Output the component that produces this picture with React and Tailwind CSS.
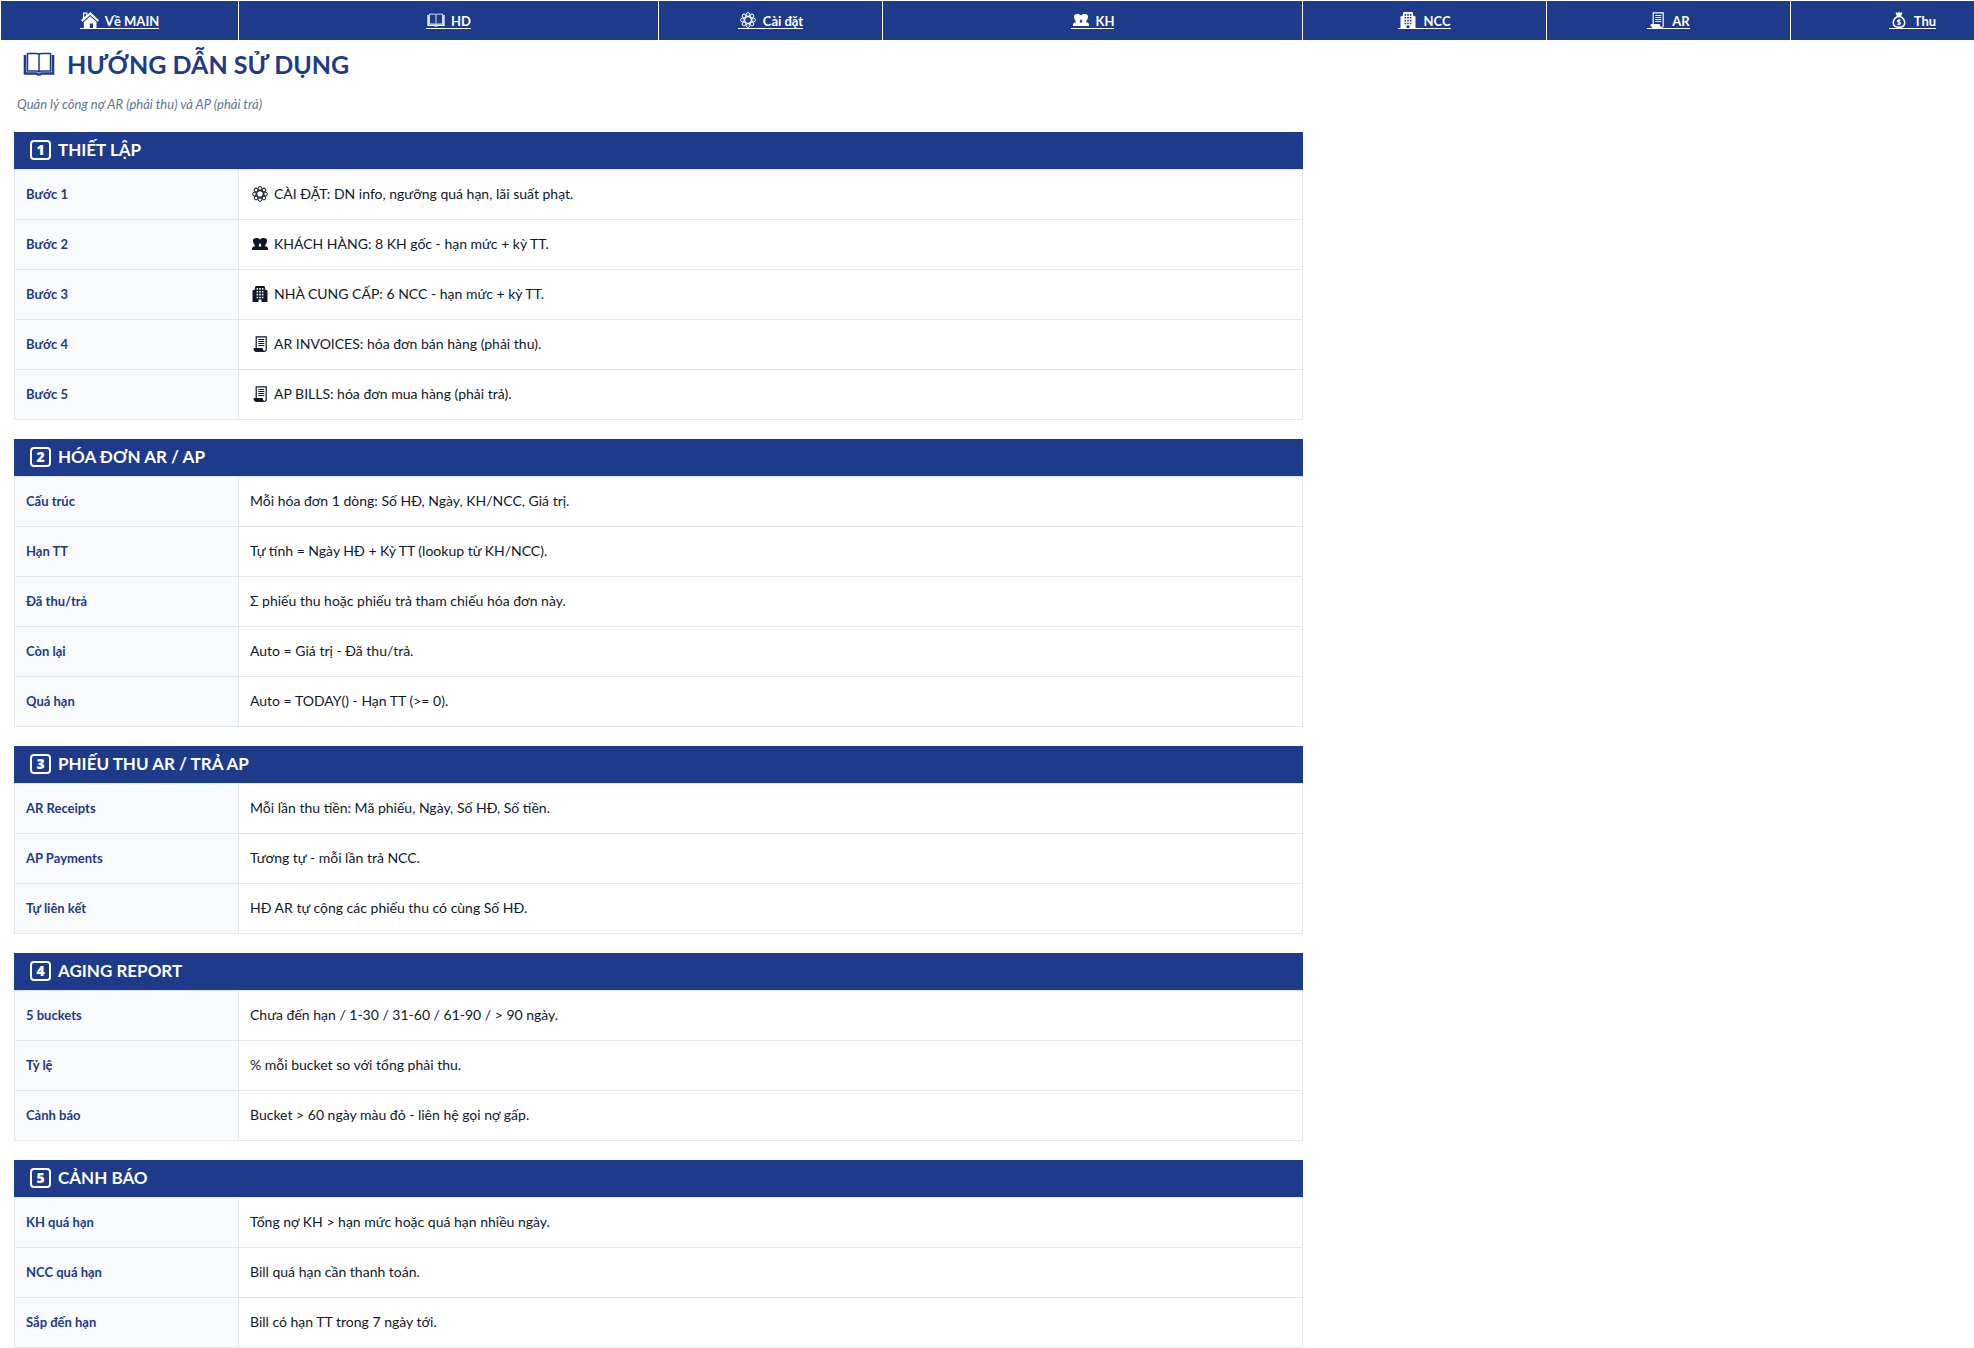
const HouseIcon = ({ className }) => (
  <svg viewBox="0 0 18 16" className={className} fill="currentColor" aria-hidden="true">
    <path d="M2 .5h4.500v2.200L9.300 0 18 8.200l-1.400 1.600-7.300-6.700L1.400 9.800 0 8.200l2-2zM3.200 1.700v3.400L5.300 3.200V1.700z" fillRule="evenodd" />
    <path d="M9.300 4.300l6.200 5.600V16H12v-4.500H8.800V16H2.800V9.900z" />
  </svg>
)

const BookIcon = ({ className }) => (
  <svg viewBox="0 0 32 24" className={className} fill="none" stroke="currentColor" aria-hidden="true">
    <path strokeWidth="1.500" d="M4.500 1.500h9c1.500 0 2.500.5 2.500 1.500 0-1 1-1.500 2.500-1.500h9v17.500h-9c-1.500 0-2.500.5-2.500 1.500 0-1-1-1.500-2.500-1.500h-9zM16 3v17" />
    <path strokeWidth="2.600" d="M2 3v18.500h11.500c.4 1.400 4.600 1.400 5 0H30V3" />
  </svg>
)

const GearIcon = ({ className }) => (
  <svg viewBox="0 0 16 16" className={className} fill="none" stroke="currentColor" strokeWidth="1" aria-hidden="true">
    <circle cx="8" cy="8" r="3.300" strokeWidth="1.200" />
    {[0, 45, 90, 135, 180, 225, 270, 315].map((deg) => (
      <circle key={deg} cx="8" cy="2.400" r="1.800" transform={`rotate(${deg} 8 8)`} />
    ))}
  </svg>
)

const PeopleIcon = ({ className }) => (
  <svg viewBox="0 0 16 16" className={className} fill="currentColor" aria-hidden="true">
    <path
      fillRule="evenodd"
      d="M1 4.500C1 2.800 2.300 2 4.300 2S7.500 2.600 8 3.600C8.500 2.600 9.700 2 11.700 2S15 2.800 15 4.500c0 1.900-.6 3.600-1.800 4.500v1.300c1.700.3 2.800 1 2.800 2.300V14H0v-1.400C0 11.300 1.100 10.600 2.800 10.300V9C1.600 8.100 1 6.400 1 4.500zM8 6.800c-.2 1-.7 1.700-1.200 2.200v.9L8 11l1.200-1.100V9C8.700 8.500 8.200 7.800 8 6.800z"
    />
  </svg>
)

const BuildingIcon = ({ className }) => (
  <svg viewBox="0 0 16 16" className={className} fill="currentColor" aria-hidden="true">
    <path
      fillRule="evenodd"
      d="M3 1l1-1h8l1 1v2.500l2.500 1V16h-6v-2.500h-3V16h-6V4.500l2.500-1zM4.600 2v1.700h1.500V2zm2.600 0v1.700h1.600V2zm2.700 0v1.700h1.500V2zM4.600 4.900v1.700h1.500V4.900zm2.600 0v1.700h1.600V4.900zm2.700 0v1.700h1.500V4.900zM4.600 7.800v1.700h1.500V7.800zm2.600 0v1.700h1.600V7.800zm2.700 0v1.700h1.500V7.800zM4.600 10.700v1.500h1.500v-1.500zm2.600 0v1.500h1.600v-1.500zm2.700 0v1.500h1.500v-1.500z"
    />
  </svg>
)

const ReceiptIcon = ({ className }) => (
  <svg viewBox="0 0 16 16" className={className} fill="none" stroke="currentColor" aria-hidden="true">
    <path strokeWidth="1.200" d="M4.200 12.500V.8h10v12.700c0 1.200-.8 1.800-2 1.800" />
    <path strokeWidth="1" d="M6.300 3.500h6M6.300 5.500h6M6.300 7.500h6M6.300 9.500h6" />
    <path fill="currentColor" d="M2 12.500h8.500c0 1.500.5 2.500 1.800 2.900H4c-1.300 0-2-1-2-2.900z" />
  </svg>
)

const MoneyBagIcon = ({ className }) => (
  <svg viewBox="0 0 16 16" className={className} fill="none" stroke="currentColor" aria-hidden="true">
    <path strokeWidth="1.500" d="M6 4.800C4 6 2.300 8 2.300 10.700c0 3 1.900 4.500 5.700 4.500s5.700-1.500 5.700-4.500C13.700 8 12 6 10 4.800z" />
    <path fill="currentColor" d="M5 .8l1.700.5L8 .5l1.300.8L11 .8 9.800 3.800H6.200z" />
    <path strokeWidth="1.100" d="M9.600 8.500c-.8-.8-3.200-.7-3.200.6 0 1.500 3.200.7 3.200 2.200 0 1.400-2.500 1.400-3.400.5M8 7v6.300" />
  </svg>
)

const navItems = [
  { id: 'main', label: 'Về MAIN', icon: HouseIcon, width: 'w-[238px]' },
  { id: 'hd', label: 'HD', icon: BookIcon, width: 'w-[420px]' },
  { id: 'cai-dat', label: 'Cài đặt', icon: GearIcon, width: 'w-[224px]' },
  { id: 'kh', label: 'KH', icon: PeopleIcon, width: 'w-[420px]' },
  { id: 'ncc', label: 'NCC', icon: BuildingIcon, width: 'w-[244px]' },
  { id: 'ar', label: 'AR', icon: ReceiptIcon, width: 'w-[244px]' },
  { id: 'thu', label: 'Thu', icon: MoneyBagIcon, width: 'w-[244px]' }
]

const sections = [
  {
    title: 'THIẾT LẬP',
    rows: [
      { label: 'Bước 1', icon: GearIcon, text: 'CÀI ĐẶT: DN info, ngưỡng quá hạn, lãi suất phạt.' },
      { label: 'Bước 2', icon: PeopleIcon, text: 'KHÁCH HÀNG: 8 KH gốc - hạn mức + kỳ TT.' },
      { label: 'Bước 3', icon: BuildingIcon, text: 'NHÀ CUNG CẤP: 6 NCC - hạn mức + kỳ TT.' },
      { label: 'Bước 4', icon: ReceiptIcon, text: 'AR INVOICES: hóa đơn bán hàng (phải thu).' },
      { label: 'Bước 5', icon: ReceiptIcon, text: 'AP BILLS: hóa đơn mua hàng (phải trả).' }
    ]
  },
  {
    title: 'HÓA ĐƠN AR / AP',
    rows: [
      { label: 'Cấu trúc', text: 'Mỗi hóa đơn 1 dòng: Số HĐ, Ngày, KH/NCC, Giá trị.' },
      { label: 'Hạn TT', text: 'Tự tính = Ngày HĐ + Kỳ TT (lookup từ KH/NCC).' },
      { label: 'Đã thu/trả', text: 'Σ phiếu thu hoặc phiếu trả tham chiếu hóa đơn này.' },
      { label: 'Còn lại', text: 'Auto = Giá trị - Đã thu/trả.' },
      { label: 'Quá hạn', text: 'Auto = TODAY() - Hạn TT (>= 0).' }
    ]
  },
  {
    title: 'PHIẾU THU AR / TRẢ AP',
    rows: [
      { label: 'AR Receipts', text: 'Mỗi lần thu tiền: Mã phiếu, Ngày, Số HĐ, Số tiền.' },
      { label: 'AP Payments', text: 'Tương tự - mỗi lần trả NCC.' },
      { label: 'Tự liên kết', text: 'HĐ AR tự cộng các phiếu thu có cùng Số HĐ.' }
    ]
  },
  {
    title: 'AGING REPORT',
    rows: [
      { label: '5 buckets', text: 'Chưa đến hạn / 1-30 / 31-60 / 61-90 / > 90 ngày.' },
      { label: 'Tỷ lệ', text: '% mỗi bucket so với tổng phải thu.' },
      { label: 'Cảnh báo', text: 'Bucket > 60 ngày màu đỏ - liên hệ gọi nợ gấp.' }
    ]
  },
  {
    title: 'CẢNH BÁO',
    rows: [
      { label: 'KH quá hạn', text: 'Tổng nợ KH > hạn mức hoặc quá hạn nhiều ngày.' },
      { label: 'NCC quá hạn', text: 'Bill quá hạn cần thanh toán.' },
      { label: 'Sắp đến hạn', text: 'Bill có hạn TT trong 7 ngày tới.' }
    ]
  }
]

const NavBar = () => (
  <nav className="flex overflow-hidden pt-px pl-px">
    {navItems.map(({ id, label, icon: Icon, width }) => (
      <div
        key={id}
        className={`flex h-[39px] shrink-0 items-center justify-center border-r border-white bg-[#1e3a8a] ${width}`}
      >
        <a
          href={`#${id}`}
          className="flex items-end gap-[5px] border-b border-white text-[13px] leading-[14px] font-bold text-white"
        >
          <span className="flex w-5 justify-center">
            <Icon className="h-4 w-[18px]" />
          </span>
          {label}
        </a>
      </div>
    ))}
  </nav>
)

const GuideSection = ({ number, title, rows }) => (
  <section>
    <h2 className="flex h-[37px] items-center gap-[7px] bg-[#1e3a8a] pb-0.5 pl-4 text-[17px] font-bold text-white">
      <span className="flex h-5 w-[21px] items-center justify-center rounded-sm border-2 border-white font-['Open_Sans',sans-serif] text-sm leading-none font-extrabold">
        {number}
      </span>
      {title}
    </h2>
    <table className="w-full table-fixed border-collapse leading-4">
      <tbody>
        {rows.map(({ label, icon: Icon, text }) => (
          <tr key={label} className="h-[50px]">
            <th
              scope="row"
              className="w-[224px] border border-slate-200 bg-slate-50 px-[11px] pb-0.5 text-left text-[13px] font-bold text-[#1e3a8a]"
            >
              {label}
            </th>
            <td className="border border-slate-200 px-[11px] pb-0.5 text-sm leading-4 text-slate-900">
              <div className="flex items-center">
                {Icon && (
                  <span className="flex w-6 pl-0.5">
                    <Icon className="size-4" />
                  </span>
                )}
                {text}
              </div>
            </td>
          </tr>
        ))}
      </tbody>
    </table>
  </section>
)

const App = () => {
  return (
    <div className="bg-white font-['Lato',sans-serif]">
      <NavBar />
      <main className="pl-3.5">
        <h1 className="flex h-[47px] items-center gap-3 pl-[9px] text-[25px] leading-8 font-bold text-[#1e3a8a]">
          <BookIcon className="h-6 w-8" />
          HƯỚNG DẪN SỬ DỤNG
        </h1>
        <p className="h-[45px] pt-[9px] pl-[3px] text-[13px] leading-4 text-slate-500 italic">
          Quản lý công nợ AR (phải thu) và AP (phải trả)
        </p>
        <div className="flex max-w-[1289px] flex-col gap-[19px]">
          {sections.map((section, index) => (
            <GuideSection key={section.title} number={index + 1} {...section} />
          ))}
        </div>
      </main>
    </div>
  )
}

export default App
